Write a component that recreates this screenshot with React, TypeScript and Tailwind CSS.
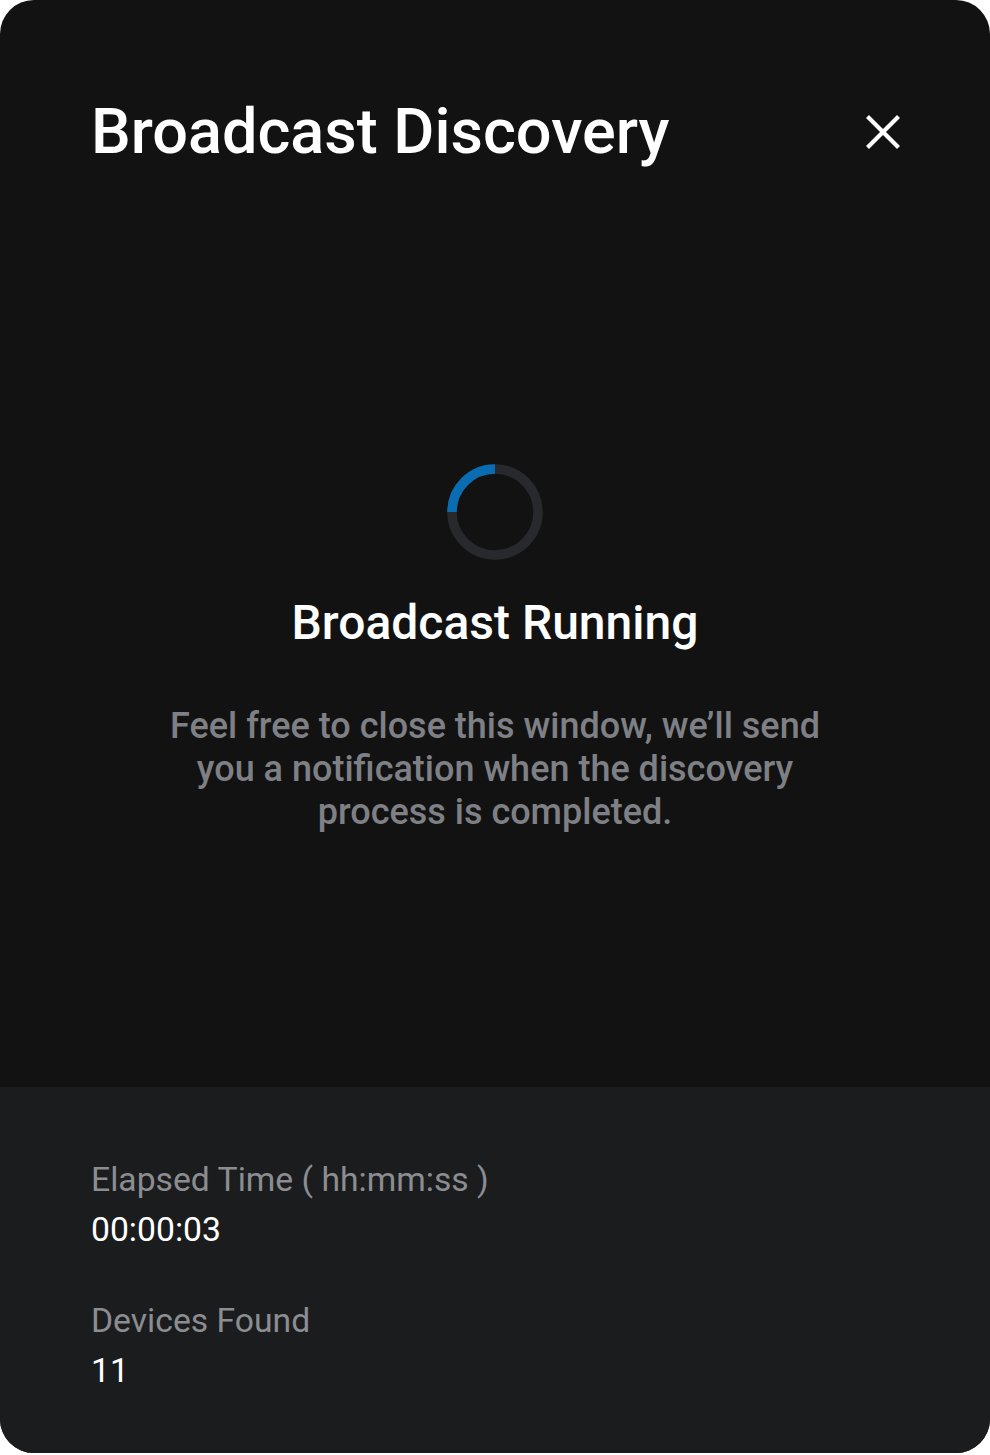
import React from "react";

export default function App() {
  return (
    <div className="w-[990px] h-[1455px] bg-white" style={{ fontFamily: "Roboto, 'Noto Sans', sans-serif" }}>
      <div className="w-[990px] h-[1453px] rounded-[34px] overflow-hidden bg-[#121212] flex flex-col">
        <div className="h-[1087px] flex flex-col">
          <div className="flex justify-between items-start pt-[100px] pl-[91px] pr-[89px]">
            <h1 className="text-[63px] leading-none font-medium text-white">Broadcast Discovery</h1>
            <svg width="36" height="36" viewBox="0 0 36 36" className="mt-[14px]">
              <path d="M2.5 2.5 L33.5 33.5 M33.5 2.5 L2.5 33.5" stroke="#ffffff" strokeWidth="4.2" fill="none" />
            </svg>
          </div>
          <div className="flex flex-col items-center">
            <svg width="96" height="96" viewBox="0 0 96 96" className="mt-[301px]">
              <circle cx="48" cy="48" r="43" stroke="#28292c" strokeWidth="9.5" fill="none" />
              <path d="M48 5 A43 43 0 0 0 5 48" stroke="#0a6db3" strokeWidth="9.5" fill="none" />
            </svg>
            <h2 className="mt-[39px] text-[48px] leading-none font-medium text-white">Broadcast Running</h2>
            <p className="mt-[58px] w-[690px] text-center text-[36px] leading-[43px] font-medium text-[#7e8085]">
              Feel free to close this window, we’ll send you a notification when the discovery process is completed.
            </p>
          </div>
        </div>
        <div className="flex-1 bg-[#1b1c1e] pt-[68px] pl-[91px] flex flex-col text-[33.7px] leading-[50px]">
          <div className="text-[#8b8d91]">Elapsed Time ( hh:mm:ss )</div>
          <div className="text-white">00:00:03</div>
          <div className="mt-[41px] text-[#8b8d91]">Devices Found</div>
          <div className="text-white">11</div>
        </div>
      </div>
    </div>
  );
}
